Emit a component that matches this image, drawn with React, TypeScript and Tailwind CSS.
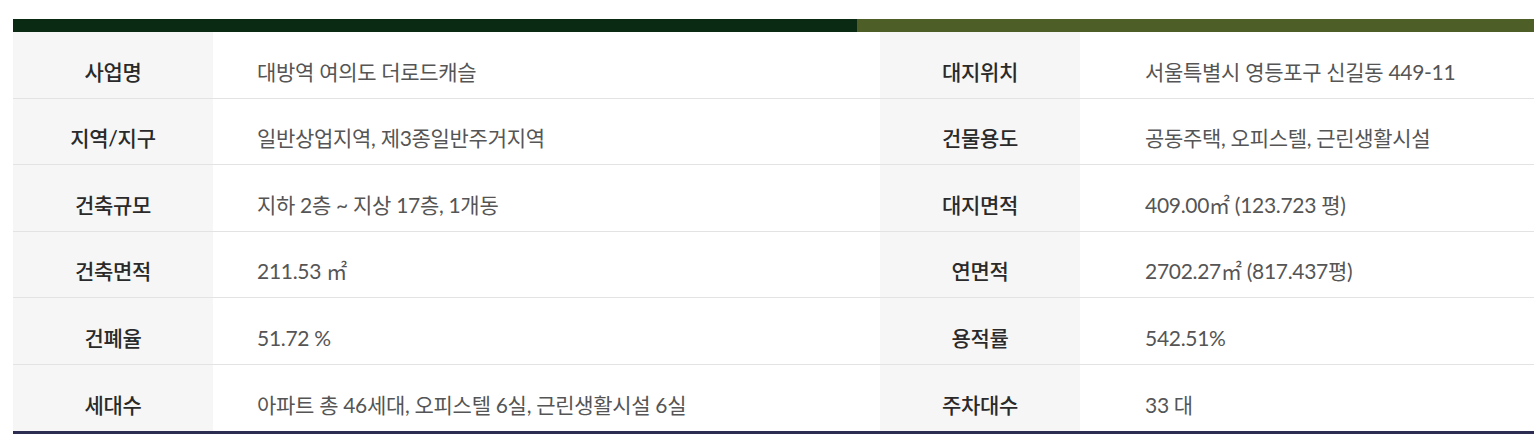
import React from 'react';

type Row = {
  leftLabel: string;
  leftValue: string;
  rightLabel: string;
  rightValue: string;
};

const rows: Row[] = [
  { leftLabel: '사업명', leftValue: '대방역 여의도 더로드캐슬', rightLabel: '대지위치', rightValue: '서울특별시 영등포구 신길동 449-11' },
  { leftLabel: '지역/지구', leftValue: '일반상업지역, 제3종일반주거지역', rightLabel: '건물용도', rightValue: '공동주택, 오피스텔, 근린생활시설' },
  { leftLabel: '건축규모', leftValue: '지하 2층 ~ 지상 17층, 1개동', rightLabel: '대지면적', rightValue: '409.00㎡ (123.723 평)' },
  { leftLabel: '건축면적', leftValue: '211.53 ㎡', rightLabel: '연면적', rightValue: '2702.27㎡ (817.437평)' },
  { leftLabel: '건폐율', leftValue: '51.72 %', rightLabel: '용적률', rightValue: '542.51%' },
  { leftLabel: '세대수', leftValue: '아파트 총 46세대, 오피스텔 6실, 근린생활시설 6실', rightLabel: '주차대수', rightValue: '33 대' },
];

const App: React.FC = () => {
  return (
    <div
      className="w-[1534px] h-[448px] bg-white pt-[19px] pl-[13px] overflow-hidden"
      style={{ fontFamily: 'Lato, "Noto Sans CJK KR", sans-serif' }}
    >
      {/* top accent bar */}
      <div className="flex h-[13px] w-[1521px]">
        <div className="w-[844px] bg-[#0b2a14]" />
        <div className="flex-1 bg-[#4d5f27]" />
      </div>

      <div className="w-[1521px] border-b-[3px] border-[#2c2d50]">
        {rows.map((row, i) => (
          <div
            key={row.leftLabel}
            className={`grid grid-cols-[200px_667px_200px_1fr] h-[66.5px] ${i < rows.length - 1 ? 'border-b border-[#e3e3e3]' : ''}`}
          >
            <div className="flex items-center justify-center pt-[13px] bg-[#f6f6f6] text-[21px] font-medium text-[#2a2a2a] tracking-[-0.3px]">
              {row.leftLabel}
            </div>
            <div className="flex items-center pt-[13px] pl-[44px] text-[21px] text-[#555] tracking-[-0.3px]">
              {row.leftValue}
            </div>
            <div className="flex items-center justify-center pt-[13px] bg-[#f6f6f6] text-[21px] font-medium text-[#2a2a2a] tracking-[-0.3px]">
              {row.rightLabel}
            </div>
            <div className="flex items-center pt-[13px] pl-[65px] text-[21px] text-[#555] tracking-[-0.3px]">
              {row.rightValue}
            </div>
          </div>
        ))}
      </div>
    </div>
  );
};

export default App;
